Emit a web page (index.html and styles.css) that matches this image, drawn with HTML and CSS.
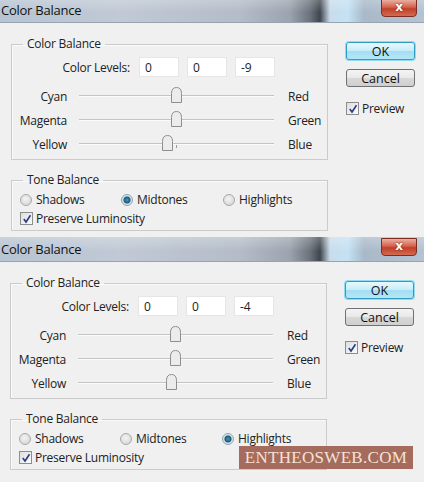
FILE: index.html
```html
<!DOCTYPE html>
<html lang="en">
<head>
    <meta charset="UTF-8">
    <title>Color Balance</title>
    <link rel="stylesheet" href="styles.css">
</head>
<body>
    <!-- First dialog: midtones -->
    <div class="dialog first">
        <div class="titlebar">
            <span class="title">Color Balance</span>
            <span class="close">x</span>
        </div>
        <div class="dialog-body">
            <div class="groups">
                <fieldset class="group balance">
                    <legend>Color Balance</legend>
                    <div class="levels">
                        <span class="levels-label">Color Levels:</span>
                        <input type="text" value="0">
                        <input type="text" value="0">
                        <input type="text" value="-9">
                    </div>
                    <div class="slider-row">
                        <span class="left">Cyan</span>
                        <div class="track"><span class="thumb" style="left: 97.5px"><svg width="11" height="16" viewBox="0 0 11 16"><path d="M0.5 15.5 V6.5 Q0.5 0.5 5.5 0.5 Q10.5 0.5 10.5 6.5 V15.5 Z" /></svg></span></div>
                        <span class="right">Red</span>
                    </div>
                    <div class="slider-row">
                        <span class="left">Magenta</span>
                        <div class="track"><span class="thumb" style="left: 97.5px"><svg width="11" height="16" viewBox="0 0 11 16"><path d="M0.5 15.5 V6.5 Q0.5 0.5 5.5 0.5 Q10.5 0.5 10.5 6.5 V15.5 Z" /></svg></span></div>
                        <span class="right">Green</span>
                    </div>
                    <div class="slider-row">
                        <span class="left">Yellow</span>
                        <div class="track"><span class="thumb" style="left: 88.7px"><svg width="11" height="16" viewBox="0 0 11 16"><path d="M0.5 15.5 V6.5 Q0.5 0.5 5.5 0.5 Q10.5 0.5 10.5 6.5 V15.5 Z" /></svg></span></div>
                        <span class="right">Blue</span>
                    </div>
                </fieldset>
                <fieldset class="group tone">
                    <legend>Tone Balance</legend>
                    <div class="radios">
                        <label class="radio-item"><span class="radio"></span>Shadows</label>
                        <label class="radio-item"><span class="radio on"></span>Midtones</label>
                        <label class="radio-item"><span class="radio"></span>Highlights</label>
                    </div>
                    <label class="check-item"><span class="check"><svg width="10" height="10" viewBox="0 0 10 10"><path d="M1.8 5 L4 8 L8.5 1.2" /></svg></span>Preserve Luminosity</label>
                </fieldset>
            </div>
            <div class="actions">
                <button class="btn ok">OK</button>
                <button class="btn">Cancel</button>
                <label class="check-item preview"><span class="check"><svg width="10" height="10" viewBox="0 0 10 10"><path d="M1.8 5 L4 8 L8.5 1.2" /></svg></span>Preview</label>
            </div>
        </div>
    </div>

    <!-- Second dialog: highlights -->
    <div class="dialog second">
        <div class="titlebar">
            <span class="title">Color Balance</span>
            <span class="close">x</span>
        </div>
        <div class="dialog-body">
            <div class="groups">
                <fieldset class="group balance">
                    <legend>Color Balance</legend>
                    <div class="levels">
                        <span class="levels-label">Color Levels:</span>
                        <input type="text" value="0">
                        <input type="text" value="0">
                        <input type="text" value="-4">
                    </div>
                    <div class="slider-row">
                        <span class="left">Cyan</span>
                        <div class="track"><span class="thumb" style="left: 97.5px"><svg width="11" height="16" viewBox="0 0 11 16"><path d="M0.5 15.5 V6.5 Q0.5 0.5 5.5 0.5 Q10.5 0.5 10.5 6.5 V15.5 Z" /></svg></span></div>
                        <span class="right">Red</span>
                    </div>
                    <div class="slider-row">
                        <span class="left">Magenta</span>
                        <div class="track"><span class="thumb" style="left: 97.5px"><svg width="11" height="16" viewBox="0 0 11 16"><path d="M0.5 15.5 V6.5 Q0.5 0.5 5.5 0.5 Q10.5 0.5 10.5 6.5 V15.5 Z" /></svg></span></div>
                        <span class="right">Green</span>
                    </div>
                    <div class="slider-row">
                        <span class="left">Yellow</span>
                        <div class="track"><span class="thumb" style="left: 93.6px"><svg width="11" height="16" viewBox="0 0 11 16"><path d="M0.5 15.5 V6.5 Q0.5 0.5 5.5 0.5 Q10.5 0.5 10.5 6.5 V15.5 Z" /></svg></span></div>
                        <span class="right">Blue</span>
                    </div>
                </fieldset>
                <fieldset class="group tone">
                    <legend>Tone Balance</legend>
                    <div class="radios">
                        <label class="radio-item"><span class="radio"></span>Shadows</label>
                        <label class="radio-item"><span class="radio"></span>Midtones</label>
                        <label class="radio-item"><span class="radio on"></span>Highlights</label>
                    </div>
                    <label class="check-item"><span class="check"><svg width="10" height="10" viewBox="0 0 10 10"><path d="M1.8 5 L4 8 L8.5 1.2" /></svg></span>Preserve Luminosity</label>
                </fieldset>
            </div>
            <div class="actions">
                <button class="btn ok">OK</button>
                <button class="btn">Cancel</button>
                <label class="check-item preview"><span class="check"><svg width="10" height="10" viewBox="0 0 10 10"><path d="M1.8 5 L4 8 L8.5 1.2" /></svg></span>Preview</label>
            </div>
        </div>
        <div class="watermark">ENTHEOSWEB.COM</div>
    </div>
</body>
</html>
```

FILE: styles.css
```css
body {
    margin: 0;
    background-color: #f0f0f0;
    font-family: "Open Sans", "Liberation Sans", sans-serif;
    font-size: 12px;
    letter-spacing: -0.25px;
    color: #222;
    overflow: hidden;
}
.dialog {
    position: relative;
    height: 239px;
    background-color: #f0f0f0;
}
.dialog.first {
    margin-top: -2px;
}
.titlebar {
    height: 24px;
    display: flex;
    justify-content: space-between;
    align-items: flex-start;
    border-bottom: 1px solid #97a3af;
    background:
        linear-gradient(to bottom, rgba(255, 255, 255, 0.25), rgba(255, 255, 255, 0) 60%),
        linear-gradient(to right, #b7c4d3 0, #c0c9d5 120px, #b3bcc7 240px, #9aa3ae 290px, #6b727b 310px, #3f454c 320px, #c9dceb 330px, #c3e2f4 348px, #a9b9c8 364px, #b3c3d3 424px);
}
.title {
    font-size: 13px;
    line-height: 24px;
    color: #111;
    padding-left: 1px;
}
.close {
    width: 34px;
    height: 16px;
    margin-right: 7px;
    margin-top: 1px;
    border: 1px solid #7c2e22;
    border-radius: 0 0 4px 4px;
    background: linear-gradient(to bottom, #e9b0a0, #d6614a 45%, #c0402a 55%, #d56a50);
    color: #fff;
    font-family: "DejaVu Sans", sans-serif;
    font-weight: bold;
    font-size: 12px;
    line-height: 14px;
    letter-spacing: 0;
    text-align: center;
    text-shadow: 0 0 2px #6a1a10;
}
.dialog-body {
    display: flex;
    padding: 13px 0 0 11px;
}
.dialog.second .dialog-body {
    padding-left: 10px;
}
.groups {
    width: 317px;
}
.group {
    margin: 0;
    padding: 0;
    min-width: 0;
    border: 1px solid #cbcbcb;
    box-shadow: inset 1px 1px 0 #fafafa;
}
.group legend {
    margin-left: 11px;
    padding: 0 4px;
    line-height: 16px;
}
.balance {
    padding: 5px 0 3px;
}
.tone {
    margin-top: 12px;
    padding: 2px 0 2px;
}
.levels {
    display: flex;
    align-items: center;
    gap: 8px;
    height: 20px;
    margin-bottom: 7px;
}
.levels-label {
    width: 118px;
    text-align: right;
    margin-right: 1px;
}
.levels input {
    width: 40px;
    height: 20px;
    box-sizing: border-box;
    border: 1px solid #e6e6e6;
    background-color: #fff;
    padding: 0 0 0 5px;
    font-family: inherit;
    font-size: 12px;
    color: #222;
}
.slider-row {
    display: grid;
    grid-template-columns: 55px 195px auto;
    column-gap: 12px;
    align-items: center;
    height: 24px;
}
.slider-row .left {
    text-align: right;
}
.slider-row .right {
    margin-left: 2px;
}
.track {
    position: relative;
    height: 0;
    border-top: 1px solid #c4c4c4;
    border-bottom: 1px solid #fbfbfb;
}
.track::after {
    content: "";
    position: absolute;
    left: 97px;
    top: 1px;
    width: 1px;
    height: 3px;
    background-color: #9c9c9c;
}
.thumb {
    position: absolute;
    top: -9px;
    margin-left: -5.5px;
    width: 11px;
    height: 16px;
    z-index: 1;
}
.thumb svg {
    display: block;
}
.thumb path {
    fill: #ececec;
    stroke: #8e8e8e;
    stroke-width: 1;
}
.radios {
    display: grid;
    grid-template-columns: 101px 102px auto;
    padding-left: 8px;
    height: 19px;
    align-items: center;
}
.radio-item {
    display: flex;
    align-items: center;
    gap: 4px;
}
.radio {
    width: 10px;
    height: 10px;
    border: 1px solid #a9a9a9;
    border-radius: 50%;
    background: radial-gradient(circle at 45% 40%, #f4f4f4, #cfcfcf);
}
.radio.on {
    border-color: #8aa6b4;
    background: radial-gradient(circle at 50% 50%, #3f9ec4 0, #1b5873 3px, #d0dce2 4px, #eef2f4 6px);
}
.check-item {
    display: flex;
    align-items: center;
    gap: 3px;
    height: 19px;
    padding-left: 8px;
}
.check {
    width: 11px;
    height: 11px;
    border: 1px solid #8d8d8d;
    background: linear-gradient(135deg, #dedede, #fbfbfb);
    display: flex;
    align-items: center;
    justify-content: center;
}
.check path {
    fill: none;
    stroke: #2a3c86;
    stroke-width: 1.6;
}
.actions {
    display: flex;
    flex-direction: column;
    align-items: flex-start;
    margin-left: 18px;
    padding-top: 6px;
}
.btn {
    width: 69px;
    height: 18px;
    padding: 0;
    font-family: inherit;
    font-size: 12.5px;
    color: #111;
    border: 1px solid #717171;
    border-radius: 3px;
    background: linear-gradient(to bottom, #f4f4f4, #e8e8e8 50%, #d8d8d8 51%, #cfcfcf);
}
.btn + .btn {
    margin-top: 9px;
}
.btn.ok {
    border-color: #2e9ec4;
    box-shadow: 0 0 0 1px #8fdcf2;
    background: linear-gradient(to bottom, #e9f8fd, #c5ecf9 50%, #a3def3 51%, #b4e6f6);
}
.preview {
    margin-top: 12px;
    padding-left: 0;
}
.watermark {
    position: absolute;
    left: 239px;
    top: 209px;
    width: 174px;
    height: 23px;
    background-color: #a56b5c;
    color: #f4e2d8;
    font-family: "Liberation Serif", serif;
    font-size: 17px;
    line-height: 24px;
    text-align: center;
    letter-spacing: 0.3px;
}
```
